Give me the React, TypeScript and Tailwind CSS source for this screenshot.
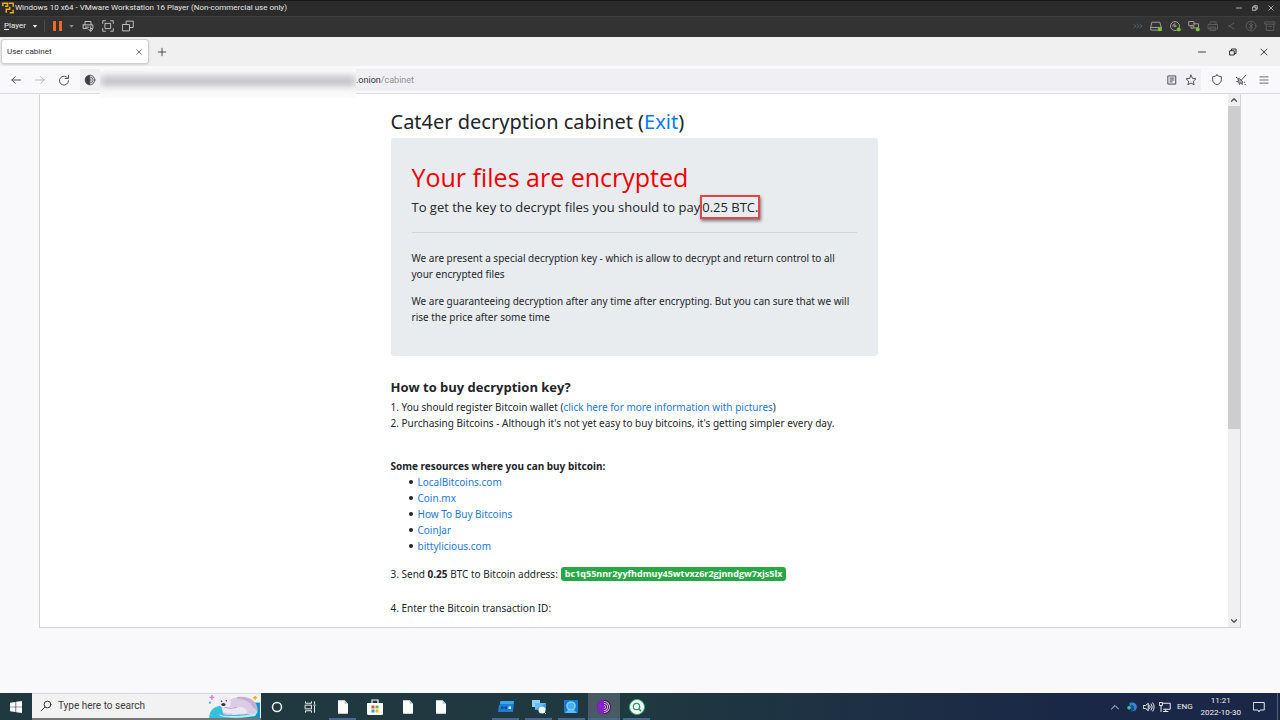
import React from "react";

type IconProps = { children: React.ReactNode; className?: string; box?: string };

function Icon({ children, className = "size-3", box = "0 0 16 16" }: IconProps) {
  return (
    <svg
      viewBox={box}
      className={`shrink-0 ${className}`}
      fill="none"
      stroke="currentColor"
      strokeWidth="1.3"
      strokeLinecap="round"
      strokeLinejoin="round"
      aria-hidden="true"
    >
      {children}
    </svg>
  );
}

function Minus({ className }: { className?: string }) {
  return <Icon className={className}><path d="M1 8h14" strokeWidth="1.8" /></Icon>;
}

function Restore({ className }: { className?: string }) {
  return (
    <Icon className={className}>
      <path d="M2 5.500h8.500V14H2z" strokeWidth="2" />
      <path d="M5 5V2h9v9h-3" strokeWidth="2" />
    </Icon>
  );
}

function Close({ className }: { className?: string }) {
  return <Icon className={className}><path d="M2 2l12 12M14 2L2 14" strokeWidth="1.8" /></Icon>;
}

function TitleBar() {
  return (
    <header className="flex h-4 shrink-0 items-center border-t border-[#171717] bg-[#2b2b2b] pb-px text-[#e6e6e6]">
      <Icon className="ml-0.5 h-3 w-3" box="0 0 14 14">
        <g stroke="#e9ac1c" strokeWidth="1.8" strokeLinecap="butt" strokeLinejoin="miter">
          <path d="M1 5V1.500h5.500v3.500H3.500" />
          <path d="M8 1.500h5v4M13 9v3.500H9M5 12.500V8.500h4V5.500" />
        </g>
      </Icon>
      <h1 className="ml-px flex-1 font-[Roboto,sans-serif] text-[8px] leading-3">
        Windows 10 x64 - VMware Workstation 16 Player (Non-commercial use only)
      </h1>
      <div className="flex gap-2.5 pr-1.5">
        <button aria-label="Minimize window"><Minus className="size-1.5" /></button>
        <button aria-label="Restore window"><Restore className="size-1.5" /></button>
        <button aria-label="Close window"><Close className="size-1.5" /></button>
      </div>
    </header>
  );
}

function PlayerBar() {
  return (
    <div className="flex h-[21px] shrink-0 items-center border-t border-[#3c3c3c] bg-[#333333] pb-0.5 text-[#c4c4c4]">
      <button className="flex items-center gap-1.5 pl-1 font-[Roboto,sans-serif] text-[8px] leading-3 text-[#ededed]">
        <span><span className="underline">P</span>layer</span>
        <svg viewBox="0 0 6 4" className="h-[3px] w-1.5" fill="currentColor"><path d="M0 0h6L3 3.500z" /></svg>
      </button>
      <span className="ml-1.5 h-3 w-px bg-[#4a4a4a]" />
      <button aria-label="Pause" className="ml-2 flex items-center gap-[3px]">
        <span className="h-2.5 w-[3px] bg-[#ef6a22]" />
        <span className="h-2.5 w-[3px] bg-[#ef6a22]" />
      </button>
      <svg viewBox="0 0 6 4" className="ml-[7px] h-[3px] w-[5px]" fill="#8a8a8a"><path d="M0 0h6L3 3.500z" /></svg>
      <div className="ml-2 flex gap-2">
        <button aria-label="Send Ctrl+Alt+Del">
          <Icon>
            <path d="M4 6.500V2h8v4.500M1.500 6.500h13v5h-3M7 11.500H1.500v-5M4.500 9.500H9M11.500 9v6M9 12.500l2.500 2.500 2.500-2.500" />
          </Icon>
        </button>
        <button aria-label="Full screen">
          <Icon><path d="M1 4.500V1h3.500M11.500 1H15v3.500M15 11.500V15h-3.500M4.500 15H1v-3.500M4.500 4.500h7v7h-7z" /></Icon>
        </button>
        <button aria-label="Unity mode">
          <Icon><path d="M1 6h9v8.500H1zM5.500 6V1.500H15V10h-5" /></Icon>
        </button>
      </div>
      <div className="ml-auto flex items-center gap-[7px] pr-1 text-[#5e5e5e]">
        <Icon className="h-3 w-2.5"><path stroke="#4f6475" d="M1 5l4 3-4 3M6 5l4 3-4 3M11 5l4 3-4 3" /></Icon>
        <Icon>
          <path stroke="#a0a0a0" d="M3 3h10l2 7v3.500H1V10zM1 10h14" />
          <circle cx="13" cy="12.500" r="2.600" fill="#7ac81e" stroke="none" />
        </Icon>
        <Icon>
          <path stroke="#a0a0a0" d="M8 2a6 6 0 1 0 6 6 6 6 0 0 0-6-6M5 8a3 3 0 0 1 3-3" />
          <circle cx="8" cy="8" r="1.200" stroke="#a0a0a0" />
          <circle cx="13" cy="12.500" r="2.600" fill="#7ac81e" stroke="none" />
        </Icon>
        <Icon>
          <path stroke="#a0a0a0" d="M1.500 2H8v5.500H1.500zM8 5h6v5.500H7V7.500M4 7.500V11h3" />
          <circle cx="13" cy="12.500" r="2.600" fill="#7ac81e" stroke="none" />
        </Icon>
        <Icon><path d="M4 6V2.500h8V6M2 6h12v6H2zM4.500 9.500h7v4.500h-7z" /></Icon>
        <Icon><path d="M5 8l4-3M5 8l4 3M4 7v2M10 4v1M10 11v1" /></Icon>
        <Icon><circle cx="8" cy="8" r="6.500" /><path d="M8 4v8M6 6l4 4-2 2M10 6L6 10" /></Icon>
        <Icon><path d="M1.500 2.500h13v3h-13zM3 5.500V14h10V5.500M6 8.500h4" /></Icon>
      </div>
    </div>
  );
}

function TabStrip() {
  return (
    <div className="flex h-[29px] shrink-0 items-center bg-[#f0f0f0] text-[#2b2a33]">
      <div className="ml-px flex h-[25px] w-[148px] items-center justify-between rounded-[3px] border border-[#cfcfd4] bg-white pl-[5px] pr-1.5 shadow-sm">
        <span className="font-[Roboto,sans-serif] text-[8px] leading-3">User cabinet</span>
        <button aria-label="Close tab"><Close className="size-1.5" /></button>
      </div>
      <button aria-label="New tab" className="ml-2"><Icon className="size-2.5"><path d="M8 2v12M2 8h12" /></Icon></button>
      <div className="ml-auto flex items-center gap-[23px] pr-3">
        <button aria-label="Minimize"><Minus className="size-2" /></button>
        <button aria-label="Restore"><Restore className="size-2" /></button>
        <button aria-label="Close"><Close className="size-2" /></button>
      </div>
    </div>
  );
}

function NavBar() {
  return (
    <nav className="flex h-7 shrink-0 items-center border-b border-[#dcdce0] bg-[#f9f9fb] text-[#4a4a55]">
      <div className="flex items-center gap-3 pl-2.5">
        <button aria-label="Back"><Icon><path d="M14 8H2.500M7 3.500L2.500 8 7 12.500" /></Icon></button>
        <button aria-label="Forward" className="text-[#b8b8bd]"><Icon><path d="M2 8h11.500M9 3.500l4.500 4.500L9 12.500" /></Icon></button>
        <button aria-label="Reload"><Icon><path d="M13 5.500A6 6 0 1 0 14 9M14 1.500v4.500H9.500" /></Icon></button>
      </div>
      <div className="ml-2.5 flex h-[22px] flex-1 items-center bg-[#f0f0f4] pl-1">
        <Icon>
          <circle cx="8" cy="8" r="6.500" fill="#d4d4d8" stroke="#5b5b66" />
          <path d="M8 1.500a6.500 6.500 0 0 0 0 13z" fill="#3d3d48" stroke="none" />
          <path d="M8 4a4 4 0 0 1 0 8M8 6.500a1.500 1.500 0 0 1 0 3" stroke="#777781" />
        </Icon>
        <span className="relative ml-1 -mb-1.5 flex h-[30px] w-64 shrink-0 items-center overflow-hidden bg-[#fafafb] pb-1">
          <span className="h-2 w-full bg-[#aeaeb4] blur-[4px]" />
        </span>
        <span className="flex-1 font-[Roboto,sans-serif] text-[9px] leading-3 text-[#8f8f96]">
          <span className="text-[#33323b]">.onion</span>/cabinet
        </span>
        <button aria-label="Reader view" className="mr-2">
          <Icon className="size-2.5"><path d="M2 1.500h12v13H2zM5 5h6M5 8h6M5 11h3" strokeWidth="1.600" /></Icon>
        </button>
        <button aria-label="Bookmark" className="mr-1">
          <Icon><path d="M8 1.500l2 4.300 4.600.6-3.400 3.200.9 4.700L8 12l-4.100 2.300.9-4.700L1.400 6.400 6 5.800z" /></Icon>
        </button>
      </div>
      <div className="flex items-center gap-3 pl-2.5 pr-[11px]">
        <button aria-label="Security level"><Icon><path d="M8 1.500c2 1.500 3.500 2 5.800 2v4.200c0 3-2.300 5.300-5.800 6.800-3.500-1.500-5.800-3.800-5.800-6.800V3.500C4.500 3.500 6 3 8 1.500z" /></Icon></button>
        <button aria-label="New identity">
          <Icon>
            <path d="M14.500 1.500L9 7.500" />
            <path d="M6.500 6.500l3.500 3.500-.5 4-2-2.500L6 14l-1-3-3-1 3-1L3.500 6.500z" fill="#a8a8b0" strokeWidth="1.1" />
            <path d="M2 4.500h.2M12.500 11h.2M13.500 14h.2" strokeWidth="1.6" />
          </Icon>
        </button>
        <button aria-label="Menu"><Icon className="size-2.5"><path d="M1.500 3h13M1.500 8h13M1.500 13h13" /></Icon></button>
      </div>
    </nav>
  );
}

const resources = ["LocalBitcoins.com", "Coin.mx", "How To Buy Bitcoins", "CoinJar", "bittylicious.com"];

function Cabinet() {
  return (
    <article className="mx-auto w-[487px] pt-4 font-['Noto_Sans','Open_Sans',sans-serif] text-[10px] leading-4 text-[#212529]">
      <h2 className="text-[20px] leading-6">
        Cat4er decryption cabinet (<a href="#exit" className="text-[#007bff]">Exit</a>)
      </h2>
      <section className="mt-1 rounded-[3px] bg-[#e9ecef] px-[21px] pb-[31px] pt-[23px]">
        <h3 className="font-['Open_Sans',sans-serif] text-[25px] leading-8 text-[#f00000]">Your files are encrypted</h3>
        <p className="mt-0.5 flex items-center font-['Open_Sans',sans-serif] text-[13px] leading-6 whitespace-nowrap">
          To get the key to decrypt files you should to pay
          <span className="border-2 border-[#e04848] leading-5 shadow-[1px_2px_3px_rgba(0,0,0,0.5)]">0.25 BTC.</span>
        </p>
        <hr className="mb-[17px] mt-[13px] border-[#d3d6d9]" />
        <p className="mb-[11px] pr-2">
          We are present a special decryption key - which is allow to decrypt and return control to all your encrypted files
        </p>
        <p>
          We are guaranteeing decryption after any time after encrypting. But you can sure that we will rise the price after some time
        </p>
      </section>
      <h4 className="mt-[21px] font-['Open_Sans',sans-serif] text-[13px] font-bold leading-5">How to buy decryption key?</h4>
      <p className="mt-0.5">
        1. You should register Bitcoin wallet (<a href="#wallet" className="text-[#1c79d8]">click here for more information with pictures</a>)
      </p>
      <p>2. Purchasing Bitcoins - Although it's not yet easy to buy bitcoins, it's getting simpler every day.</p>
      <h5 className="mt-[27px] font-bold">Some resources where you can buy bitcoin:</h5>
      <ul className="pl-[18px]">
        {resources.map((name) => (
          <li key={name} className="flex items-center gap-[5px] before:size-1 before:rounded-full before:bg-[#212529]">
            <a href="#resources" className="text-[#1c79d8]">{name}</a>
          </li>
        ))}
      </ul>
      <p className="mt-3 flex items-center whitespace-nowrap">
        <span>3. Send <b>0.25</b> BTC to Bitcoin address:</span>
        <span className="ml-[3px] rounded-[3px] bg-[#28a745] px-1 font-['Open_Sans',sans-serif] text-[9px] font-bold leading-3.5 text-white">
          bc1q55nnr2yyfhdmuy45wtvxz6r2gjnndgw7xjs5lx
        </span>
      </p>
      <p className="mt-[18px]">4. Enter the Bitcoin transaction ID:</p>
    </article>
  );
}

function ScrollTrack() {
  return (
    <div className="flex w-3 shrink-0 flex-col items-center bg-[#f0f0f0] py-0.5 text-[#505050]">
      <Icon className="size-2"><path d="M3 10.500l5-5 5 5" strokeWidth="2.500" /></Icon>
      <span className="mt-0.5 w-full grow-[323] bg-[#cdcdcd]" />
      <span className="grow-[188]" />
      <Icon className="size-2"><path d="M3 5.500l5 5 5-5" strokeWidth="2.500" /></Icon>
    </div>
  );
}

function DocIcon() {
  return (
    <svg viewBox="0 0 12 16" className="h-3.5 w-2.5" aria-hidden="true">
      <path d="M0 0h8l4 4v12H0z" fill="#fafafa" /><path d="M8 0v4h4z" fill="#b9bfc2" />
    </svg>
  );
}

function StoreIcon() {
  return (
    <svg viewBox="0 0 16 16" className="size-4" aria-hidden="true">
      <path d="M5 5V1h6v4" fill="none" stroke="#fff" strokeWidth="1.200" />
      <path d="M0 4h16v10.500q0 1.500-1.500 1.500h-13Q0 16 0 14.500z" fill="#fff" />
      <path d="M4.500 6.500h3v3h-3z" fill="#e8502a" /><path d="M8.500 6.500h3v3h-3z" fill="#6fb42c" />
      <path d="M4.500 10.500h3v3h-3z" fill="#259fe0" /><path d="M8.500 10.500h3v3h-3z" fill="#f5b51e" />
    </svg>
  );
}

function RunIcon() {
  return (
    <svg viewBox="0 0 16 14" className="h-3.5 w-4" aria-hidden="true">
      <path d="M2.500 1H16l-1 11H0L1 5h1z" fill="#1b7fd6" /><path d="M2.500 1H16l-.5 3H2z" fill="#39a7f0" />
      <path d="M3 6.500h2.500V9H3zM6.500 6.500H9V9H6.500z" fill="#0c4a93" /><path d="M10.500 6.500H13V9h-2.500z" fill="#d9efff" />
    </svg>
  );
}

function RemoteIcon() {
  return (
    <svg viewBox="0 0 16 16" className="size-4" aria-hidden="true">
      <path d="M1 1h8v7H1z" fill="#8fd0f5" /><path d="M4 4h11v7H4z" fill="#3c9de0" />
      <path d="M4 4h11L4 11z" fill="#6bbcf0" /><circle cx="11" cy="11" r="3.500" fill="#e8f5fd" /><path d="M13 13l2 2" stroke="#c7dbe8" />
    </svg>
  );
}

function ScanIcon() {
  return (
    <svg viewBox="0 0 16 16" className="size-4" aria-hidden="true">
      <path d="M1 1h14v13H1z" fill="#1878cf" /><circle cx="8" cy="7" r="4.800" fill="#7bd0fa" />
      <circle cx="8" cy="7" r="3.200" fill="#45b0ef" /><path d="M2 14l3-3h6l3 3z" fill="#5fbdf5" />
    </svg>
  );
}

function TorIcon() {
  return (
    <svg viewBox="0 0 16 16" className="size-3.5" aria-hidden="true">
      <circle cx="8" cy="8" r="8" fill="#420c5d" />
      <path d="M8 0a8 8 0 0 0 0 16z" fill="#8c1fd0" />
      <g fill="none" stroke="#dcc3ec" strokeWidth="1.200">
        <path d="M8 1.700a6.300 6.300 0 0 1 0 12.600M8 4a4 4 0 0 1 0 8M8 6.300a1.700 1.700 0 0 1 0 3.400" />
      </g>
    </svg>
  );
}

function FinderIcon() {
  return (
    <svg viewBox="0 0 16 16" className="size-4" aria-hidden="true">
      <circle cx="8" cy="8" r="7.500" fill="#fff" stroke="#2db56b" />
      <circle cx="7.500" cy="7.500" r="3.200" fill="none" stroke="#239b57" strokeWidth="1.300" />
      <path d="M10 10l2.200 2.200" stroke="#239b57" strokeWidth="1.500" />
    </svg>
  );
}

function BearArt() {
  return (
    <svg viewBox="0 0 54 25" className="h-full w-[54px] shrink-0" aria-hidden="true">
      <path d="M1 25Q2 13 14 12l20-3h20v16z" fill="#35c0dc" />
      <path d="M46 9h8v16H36z" fill="#1594c4" />
      <path d="M11 21q4 2 14 2 16 0 27-5l-3 5q-16 3-32 1-5-1-6-3z" fill="#bdeefa" />
      <path d="M17 11q4-8 19-8 11 2 15 11 2 7-6 7l-24 1q-6 0-6-4z" fill="#d9cce4" />
      <path d="M30 5q12 0 17 9l4 3q1-6-3-9-5-6-18-5z" fill="#c3b1d2" />
      <path d="M31 14q8-2 10 6l-16 2q1-5 6-8z" fill="#efe6f2" />
      <path d="M11 5q0-3 3-2 4-2 7 1 4-1 2 3 2 4-1 7-4 2-8 0-4-3-3-9z" fill="#efe7f2" />
      <path d="M14 15q8-2 17-1l2 4q-8 4-17 1z" fill="#efe6f2" />
      <path d="M17 14q7 2 13 0" fill="none" stroke="#a48fb6" strokeWidth=".8" />
      <circle cx="14" cy="7.500" r=".8" fill="#33313c" /><circle cx="19" cy="7" r=".8" fill="#33313c" />
      <ellipse cx="16" cy="11" rx="2.200" ry="1.600" fill="#33313c" />
      <path d="M4 1v5M1.500 3.500h5" stroke="#d07ae6" strokeWidth="1.500" />
      <circle cx="2" cy="9" r="1.200" fill="#43b5e8" />
      <path d="M49 2v4M47 4h4" stroke="#f2a72c" strokeWidth="1.500" />
    </svg>
  );
}

const apps: { name: string; icon?: React.ReactNode; running?: boolean; active?: boolean }[] = [
  { name: "Cortana", icon: <Icon className="size-3"><circle cx="8" cy="8" r="6" strokeWidth="2" /></Icon> },
  { name: "Task View", icon: <Icon className="size-3"><path d="M2 1v2h8V1M2 5.500h8v5H2zM2 15v-2h8v2M14 1v3M14 7v8M13 5.500h2" /></Icon> },
  { name: "Document", icon: <DocIcon />, running: true },
  { name: "Store", icon: <StoreIcon /> },
  { name: "Notes", icon: <DocIcon /> },
  { name: "Files", icon: <DocIcon /> },
  { name: "Blank" },
  { name: "Run", icon: <RunIcon />, running: true },
  { name: "Remote", icon: <RemoteIcon />, running: true },
  { name: "Scanner", icon: <ScanIcon />, running: true },
  { name: "Tor Browser", icon: <TorIcon />, running: true, active: true },
  { name: "Finder", icon: <FinderIcon />, running: true },
];

function Taskbar() {
  return (
    <footer className="flex h-[27px] shrink-0 items-stretch bg-linear-to-r from-[#203840] from-50% to-[#1a2747] to-85% text-[#f0f0f0]">
      <button aria-label="Start" className="flex w-8 items-center justify-center">
        <svg viewBox="0 0 12 12" className="size-3" fill="#fff" aria-hidden="true">
          <path d="M0 1.700l5.500-.8v4.800H0zM6.200.8L12 0v5.700H6.200zM0 6.300h5.500v4.800L0 10.300zM6.200 6.300H12V12l-5.800-.8z" />
        </svg>
      </button>
      <label className="flex w-[229px] items-center border-b-2 border-t border-b-[#777777] border-t-[#d8d8d8] bg-[#f2f2f2] pl-2 text-[#303030]">
        <Icon className="size-3"><circle cx="10" cy="6" r="4.500" /><path d="M6.500 9.500L1.500 14.500" /></Icon>
        <input
          type="text"
          aria-label="Search"
          placeholder="Type here to search"
          className="ml-1.5 min-w-0 flex-1 bg-transparent font-[Roboto,sans-serif] text-[10px] leading-4 outline-none placeholder:text-[#3c3c3c]"
        />
        <BearArt />
      </label>
      <div className="grid w-[392px] grid-cols-12">
        {apps.map((app) => (
          <button
            key={app.name}
            aria-label={app.name}
            className={`flex items-center justify-center ${app.active ? "bg-[#4a5a65]" : ""}`}
          >
            <span
              className={`flex h-full items-center justify-center border-b-2 pt-0.5 ${app.active ? "w-full" : "w-[27px]"} ${app.running ? "border-[#49688e]" : "border-transparent"}`}
            >
              {app.icon}
            </span>
          </button>
        ))}
      </div>
      <div className="ml-auto flex items-center">
        <button aria-label="Show hidden icons" className="mr-2"><Icon className="size-2"><path d="M1 12l7-7 7 7" strokeWidth="1.800" /></Icon></button>
        <svg viewBox="0 0 12 12" className="mr-1.5 size-2.5" aria-hidden="true">
          <path d="M3 1q8-2 9 5-1 6-7 5 2-5-2-7z" fill="#3187d8" /><path d="M5 3q5 1 3 8H5z" fill="#1b4d9a" /><circle cx="2.500" cy="7" r="2.200" fill="#32cf8c" />
        </svg>
        <Icon className="mr-1 size-3"><path d="M1 6h2.500L7 3v10L3.500 10H1zM9 6q1.500 2 0 4M11 4q3 4 0 8M13 2.500q4 5.500 0 11" /></Icon>
        <Icon className="mr-1.5 size-3"><path d="M5 3h10v8H6M9 11v3M6 14h6M1 2h3.500v4H1zM2.700 6v8" /></Icon>
        <span className="mr-2 font-[Roboto,sans-serif] text-[8px] leading-3">ENG</span>
        <time className="flex flex-col items-center font-[Roboto,sans-serif] text-[8px] leading-3">
          <span>11:21</span>
          <span>2022-10-30</span>
        </time>
        <button aria-label="Notifications" className="ml-3 mr-3"><Icon className="size-3"><path d="M1 2h14v10H9.500L8 14.500 6.500 12H1z" /></Icon></button>
        <span className="h-full w-[3px] border-l border-[#536078]" />
      </div>
    </footer>
  );
}

export default function App() {
  return (
    <div className="flex h-screen flex-col overflow-hidden bg-[#f9f9fb] font-['Open_Sans','Noto_Sans',sans-serif]">
      <TitleBar />
      <PlayerBar />
      <TabStrip />
      <NavBar />
      <main className="mx-[39px] mb-[65px] flex min-h-0 flex-1 overflow-hidden border-x border-b border-[#d2d2d5] bg-white">
        <div className="min-w-0 flex-1"><Cabinet /></div>
        <ScrollTrack />
      </main>
      <Taskbar />
    </div>
  );
}
